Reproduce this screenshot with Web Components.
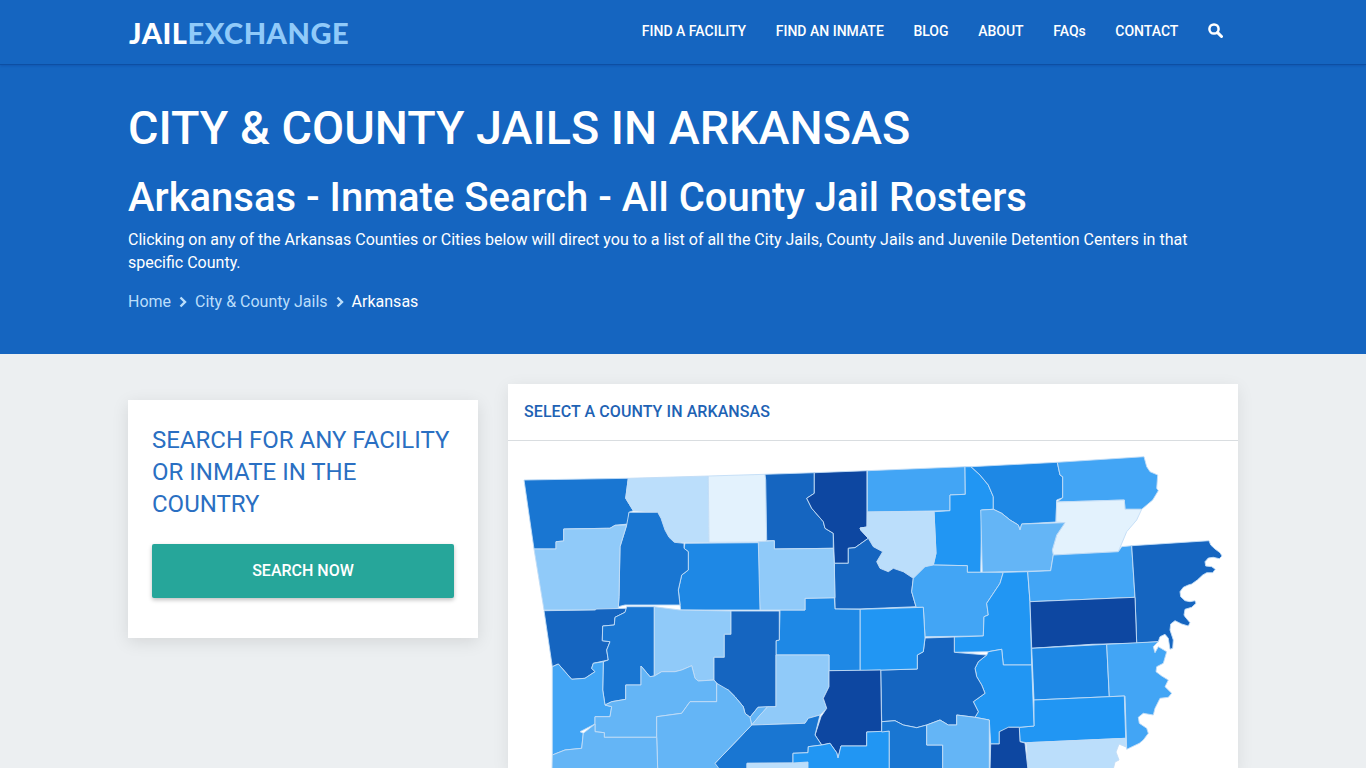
<!DOCTYPE html>
<html lang="en">
<head>
<meta charset="utf-8">
<title>City & County Jails in Arkansas</title>
<style>
  html { overflow: hidden; }
  body {
    margin: 0;
    background: #eceff1;
    font-family: Roboto, "Liberation Sans", sans-serif;
  }
  .content {
    width: 1110px;
    margin: 0 auto;
    padding-top: 30px;
    display: grid;
    grid-template-columns: 350px 730px;
    gap: 30px;
    align-items: start;
  }
</style>
</head>
<body>
<site-nav></site-nav>
<page-hero
  heading="CITY &amp; COUNTY JAILS IN ARKANSAS"
  subheading="Arkansas - Inmate Search - All County Jail Rosters">
  Clicking on any of the Arkansas Counties or Cities below will direct you to a list of all the City Jails, County Jails and Juvenile Detention Centers in that specific County.
</page-hero>
<div class="content">
  <search-card>SEARCH FOR ANY FACILITY OR INMATE IN THE COUNTRY</search-card>
  <county-map>SELECT A COUNTY IN ARKANSAS</county-map>
</div>

<script>
class SiteNav extends HTMLElement {
  constructor() {
    super();
    this.attachShadow({ mode: "open" });
    this.shadowRoot.innerHTML = `
      <style>
        :host {
          display: block;
          background: #1565c0;
          border-bottom: 1px solid #0d4fa3;
          box-shadow: 0 1px 2px rgba(13,71,161,0.45);
          position: relative;
        }
        nav {
          width: 1110px;
          height: 64px;
          margin: 0 auto;
          display: flex;
          justify-content: space-between;
        }
        .logo {
          font: 900 29px/66px Lato, "Open Sans", sans-serif;
          letter-spacing: 0.5px;
          color: #fff;
          text-decoration: none;
          margin-left: 1px;
        }
        .logo span { color: #90caf9; }
        ul {
          list-style: none;
          margin: 0;
          padding: 0 15px 0 0;
          display: flex;
          gap: 29.6px;
          height: 61px;
          align-items: center;
        }
        a.link {
          color: #fff;
          font-size: 14px;
          font-weight: 500;
          text-decoration: none;
        }
        svg { display: block; }
      </style>
      <nav>
        <a class="logo" href="#">JAIL<span>EXCHANGE</span></a>
        <ul>
          <li><a class="link" href="#">FIND A FACILITY</a></li>
          <li><a class="link" href="#">FIND AN INMATE</a></li>
          <li><a class="link" href="#">BLOG</a></li>
          <li><a class="link" href="#">ABOUT</a></li>
          <li><a class="link" href="#">FAQs</a></li>
          <li><a class="link" href="#">CONTACT</a></li>
          <li>
            <svg width="15" height="15" viewBox="0 0 15 15" fill="none" stroke="#fff">
              <circle cx="6" cy="6" r="4.6" stroke-width="2.5"/>
              <path d="M9.6 9.6l3.9 3.900" stroke-width="3" stroke-linecap="round"/>
            </svg>
          </li>
        </ul>
      </nav>
    `;
  }
}

class PageHero extends HTMLElement {
  constructor() {
    super();
    this.attachShadow({ mode: "open" });
    this.shadowRoot.innerHTML = `
      <style>
        :host {
          display: block;
          background: #1565c0;
          color: #fff;
          height: 289px;
        }
        .inner { width: 1110px; margin: 0 auto; padding-top: 33px; }
        h1 {
          margin: 0;
          font-size: 46.7px;
          line-height: 60px;
          font-weight: 500;
        }
        h2 {
          margin: 16px 0 0;
          font-size: 40px;
          line-height: 48px;
          font-weight: 500;
        }
        p {
          margin: 6px 0 0;
          font-size: 16px;
          line-height: 23px;
        }
        .crumbs {
          display: flex;
          align-items: center;
          gap: 8px;
          margin-top: 16px;
          font-size: 16px;
          line-height: 24px;
        }
        .crumbs a { color: #bbdefb; text-decoration: none; }
        .crumbs svg { display: block; }
      </style>
      <div class="inner">
        <h1></h1>
        <h2></h2>
        <p><slot></slot></p>
        <div class="crumbs">
          <a href="#">Home</a>
          <svg width="8" height="12" viewBox="0 0 8 12" fill="none" stroke="#bbdefb" stroke-width="2.4"><path d="M1.5 1.5L6 6l-4.500 4.500"/></svg>
          <a href="#">City &amp; County Jails</a>
          <svg width="8" height="12" viewBox="0 0 8 12" fill="none" stroke="#bbdefb" stroke-width="2.4"><path d="M1.5 1.5L6 6l-4.500 4.500"/></svg>
          <span>Arkansas</span>
        </div>
      </div>
    `;
    this.shadowRoot.querySelector("h1").textContent = this.getAttribute("heading");
    this.shadowRoot.querySelector("h2").textContent = this.getAttribute("subheading");
  }
}

class SearchCard extends HTMLElement {
  constructor() {
    super();
    this.attachShadow({ mode: "open" });
    this.shadowRoot.innerHTML = `
      <style>
        :host {
          display: block;
          margin-top: 16px;
          background: #fff;
          padding: 24px 24px 40px;
          box-shadow: 0 4px 16px rgba(0,0,0,0.1);
        }
        h3 {
          margin: 0;
          font-size: 24px;
          line-height: 32px;
          font-weight: 400;
          color: #2a6fc2;
        }
        a {
          display: block;
          margin-top: 24px;
          height: 54px;
          line-height: 54px;
          text-align: center;
          background: #26a69a;
          color: #fff;
          font-size: 16px;
          font-weight: 500;
          text-decoration: none;
          border-radius: 2px;
          box-shadow: 0 2px 4px rgba(0,0,0,0.25);
        }
      </style>
      <h3><slot></slot></h3>
      <a href="#">SEARCH NOW</a>
    `;
  }
}

// county shapes, in page pixels (viewBox starts at the card's body corner)
const COUNTIES = [
  ["#1976d2", "524,480 628.3,478.3 625.7,498.3 633.3,510.7 629,512.3 628.3,524 615,525.3 610,528.3 606.7,528.3 563.7,529 563.7,541 556,541.7 556,549 534,549"],
  ["#bbdefb", "628.3,478.3 708.3,476 709,542.3 674.3,542.3 669,537.3 665,530 661,518.3 657.7,512.3 633.3,510.7 625.7,498.3"],
  ["#e3f2fd", "708.3,476 765,474.3 765.7,480 766.7,542 709,542.3"],
  ["#1565c0", "765,474.3 814.3,472.7 814.3,493.3 806.7,498.3 811.7,508.3 823.3,521.7 825,528.3 833.3,533.3 833.3,548.3 774.3,549 774.3,540.7 766.7,540.7 765.7,480"],
  ["#0d47a1", "814.3,472.7 867,470.7 867,527 860,528 860.7,530 868.3,538.3 855,547.7 848.3,548.3 848.3,563.3 834.3,563.3 833.3,533.3 825,528.3 823.3,521.7 811.7,508.3 806.7,498.3 814.3,493.3"],
  ["#42a5f5", "867.3,470.7 965,466.7 965.3,494.3 950,495 950,510.7 867.3,512"],
  ["#2196f3", "965,466.7 971,466.7 980,475 988.3,485 993.3,496.7 993.3,509.3 981.7,510 980.7,572.3 967.3,572.3 967.3,565.7 933.3,565 936,553.3 934,511.7 950,510.7 950,495 965.3,494.3"],
  ["#1e88e5", "971,466.7 1057.3,462.3 1060,475 1062.7,476.7 1062.7,497.7 1056.7,500 1056,522 1021.7,524 1020,530 1018.3,525 1010,520 1001.7,513.3 993.3,509.3 993.3,496.7 988.3,485 980,475"],
  ["#42a5f5", "1057.3,462.3 1144,456.7 1146.7,466.7 1150,471.7 1157.7,475 1156.7,488.3 1158.3,490.7 1152.7,500 1141.7,509.3 1125,509.3 1124.3,500 1056.7,502 1062.7,497.7 1062.7,476.7 1060,475"],
  ["#e3f2fd", "1056.7,502 1124.3,500 1125,509.3 1141.7,509.3 1136.7,520 1126.7,531.7 1118.3,551.7 1053.3,555 1052.3,550 1056.7,535 1065,522.7 1056,522"],
  ["#64b5f6", "980.7,510 993.3,509.3 1001.7,513.3 1010,520 1018.3,525 1020,530 1021.7,524 1065,522.7 1056.7,535 1052.3,550 1053.3,555 1050.7,570.7 982.3,572.3"],
  ["#bbdefb", "867.3,512 934,511.7 936,553.3 933.3,565 925,566.7 913.3,578.3 903.3,571.7 893.3,568.3 888.3,571.7 880,568.3 876.7,561.7 882.7,551.7 873.3,546.7 868.3,538.3 860.7,530 860,528 867,527"],
  ["#1565c0", "834.3,563.3 848.3,563.3 848.3,548.3 855,547.7 868.3,538.3 873.3,546.7 882.7,551.7 876.7,561.7 880,568.3 888.3,571.7 893.3,568.3 903.3,571.7 913.3,578.3 911.7,591.7 916,606.7 860,609 835,609"],
  ["#42a5f5", "925,566.7 933.3,565 967.3,565.7 967.3,572.3 1003.3,572.3 1000,583.3 986.7,603.3 988.3,615 984,616.7 983.3,636 925,636.7 923.3,607.3 916.7,607.3 916,606.7 911.7,591.7 913.3,578.3"],
  ["#2196f3", "1003.3,572.3 1027.7,571.7 1030,601.7 1031.7,665 1003.3,665 1001.7,649.3 988.3,651.7 954.3,652.3 954.3,637 983.3,636 984,616.7 988.3,615 986.7,603.3 1000,583.3"],
  ["#42a5f5", "1027.7,571.7 1050.7,570.7 1053.3,555 1118.3,551.7 1121.7,546.7 1131.7,545.7 1135,597.3 1030,601.7"],
  ["#1565c0", "1131.7,545.7 1209,540.7 1210.7,545 1215,549 1220,552.7 1222,556 1219.3,558.7 1213.3,557.3 1208.3,558 1205,561.7 1205.7,566 1211.7,566.7 1215.3,569.3 1212.7,572.7 1206.7,572.7 1202.7,575 1197.3,580 1191.7,584 1188.3,585 1183.3,587.3 1180,591.7 1180.7,596.7 1185,600.7 1190,601.7 1195,600.7 1196,603.3 1191.7,607.3 1185,609.3 1184,615 1185,616.7 1190,622.7 1188.3,626 1181.7,624 1175,620.7 1170.7,624 1170,630 1173.3,640 1172.7,648.3 1170,649.3 1168.3,638.3 1165,634.3 1160,636.7 1158.3,641.7 1136.7,643.3 1135,597.3"],
  ["#0d47a1", "1030,601.7 1135,597.3 1136.7,643.3 1092,644.3 1031.7,648.3"],
  ["#1e88e5", "1031.7,648.3 1106.7,644.3 1109.3,696.7 1034,700"],
  ["#42a5f5", "1106.7,644.3 1158.3,641.7 1153.3,646.7 1155,652.7 1158.3,646.7 1166.7,651.7 1163.3,663.3 1156.7,666.7 1156,671.7 1161.7,676 1168.3,680 1165,686.7 1171.7,693.3 1168.3,697.3 1160,698.3 1155,708.3 1153.3,715 1143.3,713.3 1138.3,717.3 1139.3,723.3 1146.7,728.3 1148.3,733.3 1143.3,740 1139.3,743.3 1126.7,749.3 1125,696 1109.3,696.7"],
  ["#2196f3", "1034,700 1124.3,696 1125.7,738.3 1026.7,742.7 1020,741.7 1019.3,727.3 1034,726"],
  ["#bbdefb", "1026.7,742.7 1125.7,738.3 1126,747 1119,744 1116,752 1119,760 1115,762 1113,770 1028,770"],
  ["#2196f3", "988.3,651.7 1001.7,649.3 1003.3,665 1031.7,665 1034,726 1019.3,727.3 1008.3,727.3 1007.3,730 999.3,731.7 999.3,744 990.7,744 989.3,720 975,717.3 978.3,711.7 973.3,701.7 985,693.3 981.7,685 976.7,676.7 975,668.3 978.3,661.7 986.7,655"],
  ["#1565c0", "925,638 954.3,637 954.3,652.3 986.7,655 978.3,661.7 975,668.3 976.7,676.7 981.7,685 985,693.3 973.3,701.7 978.3,711.7 975,717.3 956.7,715 956.7,725 948.3,725 940,720 926.7,725 916.7,727.7 903.3,725 895,720.7 881.7,721.7 880.7,670 917.3,669 917.3,655 923.3,651.7"],
  ["#2196f3", "860,609.3 923.3,607.3 925,638 923.3,651.7 917.3,655 917.3,669 860,670.7"],
  ["#1e88e5", "780,610 805,610 805,598.3 834.3,597.7 835,609 860,609.3 860,670.7 829,670.7 829,655 776,655 776,640.7 779.3,640"],
  ["#90caf9", "758.3,541.7 774.3,540.7 774.3,549 833.3,548.3 834.3,563.3 835,597.7 805,598.3 805,610 760,610 759,593"],
  ["#1e88e5", "685,543.3 758.3,542.7 760,610 680.7,610 678.3,590 681.7,575 688.3,570 688.3,551.7 684,548.3"],
  ["#1976d2", "629,512.3 657.7,512.3 661,518.3 665,530 669,537.3 674.3,542.3 684,543.3 684,548.3 688.3,551.7 688.3,570 681.7,575 678.3,590 680,605 625,605 618.3,606.7 619,596.7 620,546.7 626.7,525"],
  ["#90caf9", "534,549 556,549 556,541.7 563.7,541 563.7,529 606.7,528.3 610,528.3 615,525.3 626.7,525 620,546.7 619,596.7 618.3,608.3 595,610 544,610"],
  ["#1565c0", "544,610.7 595,610 596.7,609 626.7,608.3 625,612.3 615,617.3 614.3,625 602.7,626 602.3,640.7 610,641.7 606.7,650 608.3,660 593.3,663.3 591.7,668.3 595,671.7 585,678.3 571.7,679.3 565,671.7 558.3,664 552.3,666.7"],
  ["#1976d2", "626.7,606.7 654.3,606.7 654.3,676 650,676.7 641,666 641,685 625.7,685 625.7,699.3 611.7,701.7 605,705 602.7,690 603.3,661.7 608.3,660 606.7,650 610,641.7 602.3,640.7 602.7,626 614.3,625 615,617.3 625,612.3"],
  ["#90caf9", "654.3,606.7 680,610 731,611 731,634.3 724.3,634.3 724.3,657.3 714,657.3 714,680 698.3,681 695,678.3 691.7,665.7 681.7,670 675,671.7 661.7,671.7 654.3,676"],
  ["#1565c0", "731,611 779.3,611 779.3,640 776,640.7 776,706.7 758,707.3 750,717.3 745,713.3 743.3,706.7 735,696.7 728.3,690 720,687.3 714,680 714,657.3 724.3,657.3 724.3,634.3 731,634.3"],
  ["#64b5f6", "758,707.3 767.7,706.7 751.7,725 750,717.3"],
  ["#90caf9", "776,655 829,655 829,686.7 823.3,698.3 826.7,708.3 820,715 808.3,718.3 805,723.3 751.7,725 760,715 767.7,706.7 776,706.7"],
  ["#0d47a1", "829,670.7 880.7,670 881.7,732 866.7,732 866.7,746 841,746 838,758 836.7,752.7 830,743.3 821.7,745 815,735 821,716.7 826.7,708.3 823.3,698.3 829,686.7"],
  ["#1976d2", "751.7,725 805,723.3 808.3,718.3 820,715 815,735 821.7,745 808.3,746.7 808,752.7 793,753.3 793,763 747,763.3 747,770 715,770 715,763.3"],
  ["#bbdefb", "747,763.3 793,763 808,762 808,770 747,770"],
  ["#2196f3", "793,753.3 808,752.7 808.3,746.7 821.7,745 830,743.3 836.7,752.7 838,758 841,746 866.7,746 866.7,732 889.3,731 889.3,770 808,770 808,762 793,763"],
  ["#1976d2", "881.7,721.7 895,720.7 903.3,725 916.7,727.7 926.7,725 926.7,745 942.7,745 942.7,770 889.3,770 889.3,731 881.7,732"],
  ["#64b5f6", "926.7,725 940,720 948.3,725 956.7,725 956.7,715 975,717.3 989.3,720 989.3,770 942.7,770 942.7,745 926.7,745"],
  ["#0d47a1", "990.7,744 999.3,744 999.3,731.7 1008.3,727.3 1019.3,727.3 1020,741.7 1025,743 1028,770 990,770"],
  ["#42a5f5", "552.3,666.7 558.3,664 565,671.7 571.7,679.3 585,678.3 595,671.7 591.7,668.3 593.3,663.3 603.3,661.7 602.7,690 605,705 611.7,706.7 610,716.7 595,716.7 595,724 580,731.7 583.3,733.3 581.7,748.3 565,750 552.3,755"],
  ["#64b5f6", "605,705 611.7,701.7 625.7,699.3 625.7,685 641,685 641,666 650,676.7 654.3,676 661.7,671.7 675,671.7 681.7,670 691.7,665.7 695,678.3 698.3,681 714,680 716.7,683.3 716.7,701.7 690,701.7 681.7,713.3 656.7,716.7 656.7,737.3 604.3,737.3 604.3,732.7 595,731.7 595,716.7 610,716.7 611.7,706.7"],
  ["#64b5f6", "656.7,716.7 681.7,713.3 690,701.7 716.7,701.7 716.7,683.3 728.3,690 735,696.7 743.3,706.7 745,713.3 750,717.3 751.7,725 715,763.3 720,770 657.7,770 656.7,737.3"],
  ["#64b5f6", "552.3,755 565,750 581.7,748.3 583.3,733.3 595,724 595,731.7 604.3,732.7 604.3,737.3 656.7,737.3 657.7,770 552,770"]
];

class CountyMap extends HTMLElement {
  constructor() {
    super();
    this.attachShadow({ mode: "open" });
    const shapes = COUNTIES.map(([fill, points]) =>
      `<polygon fill="${fill}" points="${points}"/>`).join("");
    this.shadowRoot.innerHTML = `
      <style>
        :host {
          display: block;
          background: #fff;
          box-shadow: 0 4px 16px rgba(0,0,0,0.08);
        }
        header {
          height: 56px;
          border-bottom: 1px solid #d9dde0;
          padding: 0 16px;
          display: flex;
          align-items: center;
          font-size: 16px;
          font-weight: 500;
          letter-spacing: 0.08px;
          color: #1e62b4;
        }
        header span { position: relative; top: -1px; }
        svg { display: block; }
        polygon { stroke: #c2dcf6; stroke-width: 0.9; stroke-linejoin: round; }
      </style>
      <header><span><slot></slot></span></header>
      <svg width="730" height="330" viewBox="508 441 730 330">${shapes}</svg>
    `;
  }
}

customElements.define("site-nav", SiteNav);
customElements.define("page-hero", PageHero);
customElements.define("search-card", SearchCard);
customElements.define("county-map", CountyMap);
</script>
</body>
</html>
